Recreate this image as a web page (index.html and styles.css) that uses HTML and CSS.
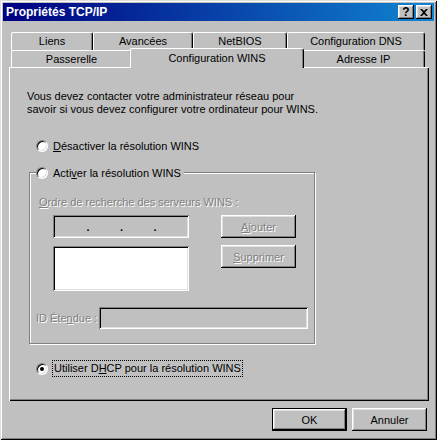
FILE: index.html
```html
<!DOCTYPE html>
<html lang="fr">
<head>
  <meta charset="UTF-8">
  <title>Propriétés TCP/IP</title>
  <link rel="stylesheet" href="styles.css">
</head>
<body>
  <div class="window">
    <div class="titlebar">
      <span class="title">Propriétés TCP/IP</span>
      <div class="caption-buttons">
        <span class="cap-btn">?</span>
        <span class="cap-btn">
          <svg width="8" height="7" viewBox="0 0 8 7"><path d="M0 0h2l2 2 2-2h2L5 3.5 8 7H6L4 5 2 7H0l3-3.5z" fill="#000"/></svg>
        </span>
      </div>
    </div>

    <div class="dialog">
      <div class="tabs">
        <div class="tab-row">
          <div class="tab w-liens">Liens</div>
          <div class="tab w-avancees">Avancées</div>
          <div class="tab w-netbios">NetBIOS</div>
          <div class="tab w-dns">Configuration DNS</div>
        </div>
        <div class="tab-row">
          <div class="tab w-passerelle">Passerelle</div>
          <div class="tab w-wins selected">Configuration WINS</div>
          <div class="tab w-ip">Adresse IP</div>
        </div>
      </div>

      <div class="pane">
        <p class="intro">Vous devez contacter votre administrateur réseau pour<br>savoir si vous devez configurer votre ordinateur pour WINS.</p>

        <div class="radio-row first">
          <span class="radio"></span>
          <span><u>D</u>ésactiver la résolution WINS</span>
        </div>

        <div class="group">
          <div class="radio-row legend">
            <span class="radio"></span>
            <span>Acti<u>v</u>er la résolution WINS</span>
          </div>

          <div class="disabled order-label"><u>O</u>rdre de recherche des serveurs WINS :</div>

          <div class="servers">
            <div class="server-fields">
              <div class="field ip-field">
                <span class="octet"></span><span class="dot">.</span>
                <span class="octet"></span><span class="dot">.</span>
                <span class="octet"></span><span class="dot">.</span>
                <span class="octet"></span>
              </div>
              <div class="field listbox"></div>
            </div>
            <div class="server-buttons">
              <div class="button disabled"><u>A</u>jouter</div>
              <div class="button disabled"><u>S</u>upprimer</div>
            </div>
          </div>

          <div class="scope-row">
            <span class="disabled scope-label">ID Éte<u>n</u>due :</span>
            <div class="field scope-field"></div>
          </div>
        </div>

        <div class="radio-row dhcp">
          <span class="radio checked"></span>
          <span class="focus">Utiliser D<u>H</u>CP pour la résolution WINS</span>
        </div>
      </div>

      <div class="footer">
        <div class="button default">OK</div>
        <div class="button">Annuler</div>
      </div>
    </div>
  </div>
</body>
</html>
```

FILE: styles.css
```css
body {
  margin: 0;
  background: #c0c0c0;
  font-family: "Liberation Sans", Arial, sans-serif;
  font-size: 11px;
  color: #000;
}
u {
  text-decoration: underline;
  text-underline-offset: 1px;
}
.window {
  width: 437px;
  height: 440px;
  box-sizing: border-box;
  padding: 3px;
  background: #c0c0c0;
  box-shadow: inset 1px 1px #dfdfdf, inset -1px -1px #000, inset 2px 2px #fff, inset -2px -2px #808080;
}
.titlebar {
  height: 18px;
  display: flex;
  align-items: center;
  justify-content: space-between;
  padding: 0 2px 0 3px;
  background: linear-gradient(90deg, #000080, #1084d0);
}
.title {
  color: #fff;
  font-weight: bold;
  font-size: 12px;
}
.caption-buttons {
  display: flex;
  gap: 2px;
}
.cap-btn {
  width: 16px;
  height: 14px;
  box-sizing: border-box;
  display: flex;
  align-items: center;
  justify-content: center;
  background: #c0c0c0;
  font-weight: bold;
  font-size: 12px;
  line-height: 14px;
  box-shadow: inset -1px -1px #000, inset 1px 1px #fff, inset -2px -2px #808080, inset 2px 2px #dfdfdf;
}
.dialog {
  padding: 11px 0 0 6px;
}
.tabs {
  margin-left: 2px;
  width: 414px;
}
.tab-row {
  display: flex;
  height: 18px;
}
.tab-row + .tab-row {
  height: 17px;
}
.tab {
  box-sizing: border-box;
  height: 100%;
  text-align: center;
  line-height: 16px;
  border-top: 1px solid #fff;
  border-left: 1px solid #fff;
  border-right: 1px solid #000;
  border-radius: 2px 3px 0 0;
  box-shadow: inset -1px 0 #808080;
}
.w-liens { width: 82px; }
.w-avancees { width: 100px; }
.w-netbios { width: 94px; }
.w-dns { width: 138px; }
.w-passerelle { width: 121px; }
.w-wins { width: 170px; }
.w-ip { width: 123px; }
.tab.selected {
  position: relative;
  z-index: 1;
  height: 20px;
  margin: -2px -2px 0 -2px;
  width: 174px;
  background: #c0c0c0;
  line-height: 18px;
}
.pane {
  width: 420px;
  height: 334px;
  box-sizing: border-box;
  padding: 0 0 0 18px;
  box-shadow: inset 1px 1px #fff, inset -1px -1px #000, inset -2px -2px #808080;
  overflow: hidden;
}
.intro {
  margin: 0;
  padding-top: 23px;
  line-height: 13px;
}
.radio-row {
  display: flex;
  align-items: center;
  gap: 5px;
  height: 13px;
  margin-left: 9px;
}
.radio-row.first {
  margin-top: 23px;
}
.radio {
  width: 12px;
  height: 12px;
  box-sizing: border-box;
  border-radius: 50%;
  background: #fff;
  border: 1px solid;
  border-color: #808080 #fff #fff #808080;
  box-shadow: inset 1px 1px #000, inset -1px -1px #dfdfdf;
  display: flex;
  align-items: center;
  justify-content: center;
}
.radio.checked::after {
  content: "";
  width: 4px;
  height: 4px;
  border-radius: 50%;
  background: #000;
}
.group {
  margin: 20px 0 0 2px;
  width: 286px;
  box-sizing: border-box;
  border: 1px solid #808080;
  box-shadow: inset 1px 1px #fff, 1px 1px #fff;
  padding-bottom: 14px;
}
.radio-row.legend {
  margin: -7px 0 0 6px;
  width: max-content;
  padding-right: 3px;
  background: #c0c0c0;
}
.disabled {
  color: #808080;
  text-shadow: 1px 1px #fff;
}
.order-label {
  margin: 17px 0 0 9px;
  line-height: 13px;
}
.servers {
  display: flex;
  margin-top: 6px;
}
.server-fields {
  margin-left: 23px;
  display: flex;
  flex-direction: column;
  gap: 8px;
}
.field {
  box-sizing: border-box;
  box-shadow: inset 1px 1px #808080, inset -1px -1px #fff, inset 2px 2px #000, inset -2px -2px #dfdfdf;
}
.ip-field {
  width: 136px;
  height: 23px;
  display: flex;
  align-items: flex-end;
  padding: 0 2px 5px 2px;
}
.octet {
  flex: 1;
}
.dot {
  width: 2px;
  line-height: 11px;
  font-weight: bold;
}
.listbox {
  width: 136px;
  height: 45px;
  background: #fff;
}
.server-buttons {
  margin-left: 32px;
  display: flex;
  flex-direction: column;
  gap: 7px;
}
.button {
  width: 75px;
  height: 23px;
  box-sizing: border-box;
  display: flex;
  align-items: center;
  justify-content: center;
  background: #c0c0c0;
  box-shadow: inset -1px -1px #000, inset 1px 1px #fff, inset -2px -2px #808080, inset 2px 2px #dfdfdf;
}
.button.default {
  border: 1px solid #000;
  box-shadow: inset -1px -1px #000, inset 1px 1px #fff, inset -2px -2px #808080, inset 2px 2px #dfdfdf;
}
.scope-row {
  display: flex;
  align-items: center;
  margin-top: 16px;
}
.scope-label {
  margin-left: 6px;
  width: 63px;
}
.scope-field {
  width: 209px;
  height: 22px;
}
.radio-row.dhcp {
  margin-top: 16px;
  height: 17px;
}
.focus {
  border: 1px dotted #000;
  padding: 0 1px;
  line-height: 15px;
  margin-left: -1px;
}
.footer {
  width: 420px;
  display: flex;
  justify-content: flex-end;
  gap: 5px;
  margin-top: 7px;
  padding-right: 2px;
  box-sizing: border-box;
}
```
